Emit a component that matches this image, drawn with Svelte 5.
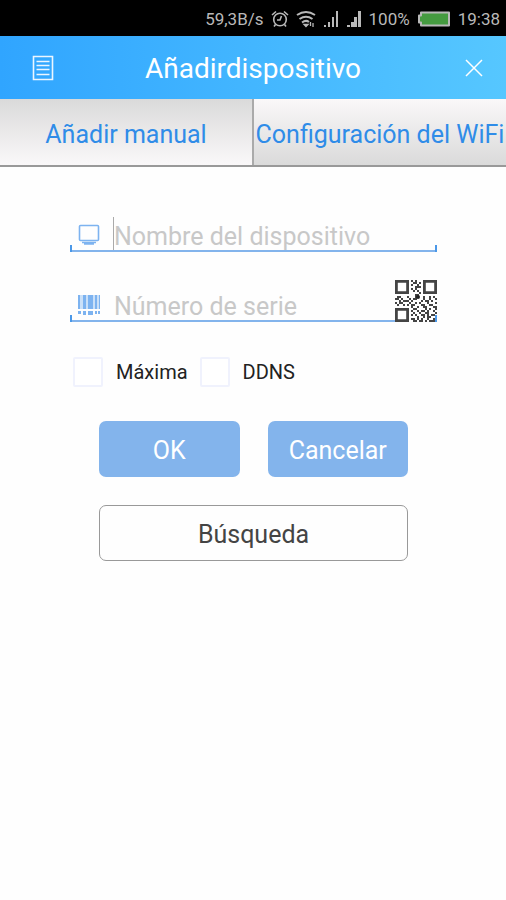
<script lang="ts">
  let name = $state('');
  let serial = $state('');
  let maxima = $state(false);
  let ddns = $state(false);
  let tab = $state('manual');

  const qrRows = [
    '111111101010001111111',
    '100000100110101000001',
    '100000101001001000001',
    '100000100011101000001',
    '100000101010001000001',
    '100000100101001000001',
    '111111100000101111111',
    '000000000011000000000',
    '011000100011001001010',
    '110100010110001001001',
    '001011101000010110100',
    '101100010010100010001',
    '010010101100011001100',
    '000000001001001100011',
    '111111100110000101001',
    '100000101001011010010',
    '100000100100100110001',
    '100000101010011010110',
    '100000100001001011001',
    '100000101101010010011',
    '111111100110110101110'
  ];

  const qrPath = qrRows
    .map((row, y) => [...row].map((c, x) => (c === '1' ? `M${x} ${y}h1v1h-1z` : '')).join(''))
    .join('');
</script>

<div class="screen">
  <div class="status-bar">
    <span>59,3B/s</span>
    <svg viewBox="0 0 18 18" width="18" height="18" fill="none" stroke="currentColor" stroke-width="1.6">
      <circle cx="9" cy="9.5" r="6.3" />
      <path d="M10.500 6L9 10H6M1 5l4-3.500M17 5l-4-3.500M4.500 14.500l-1.500 2M13.500 14.500l1.500 2" />
    </svg>
    <svg viewBox="0 0 20 18" width="20" height="18" fill="none" stroke="currentColor" stroke-width="2">
      <path d="M1 5Q10-1 19 5M3.500 9Q10 4.500 16.500 9M6 12.500Q10 9.500 13 12" />
      <path d="M8 14.500h4l-2 2zM14.500 12v4M17 13v4" fill="currentColor" stroke-width="1.3" />
    </svg>
    <svg viewBox="0 0 16 18" width="16" height="18" fill="currentColor">
      <path d="M1 15h2v2H1zM5 12h2v5H5zM9 7h2v10H9zM13 1h2v16h-2z" />
    </svg>
    <svg viewBox="0 0 16 18" width="16" height="18" fill="currentColor">
      <path d="M1 15h3v2H1zM5 12h3v5H5zM8 7h3v10H8zM12 1h3v16h-3z" />
    </svg>
    <span>100%</span>
    <svg viewBox="0 0 34 16" width="34" height="16">
      <path d="M4 1.500h28v13H4v-3H2v-7h2z" fill="#459b40" stroke="#b9b9b9" stroke-width="2" stroke-linejoin="round" />
    </svg>
    <span>19:38</span>
  </div>

  <header>
    <button class="icon-button" aria-label="Lista">
      <svg viewBox="0 0 22 26" width="22" height="26" fill="none" stroke="currentColor" stroke-width="1.6" opacity="0.9">
        <path d="M1.500 1.500h19v23h-19zM4.500 6.500h13M4.500 10.500h13M4.500 14.500h13M4.500 19.500h13" />
      </svg>
    </button>
    <h1>Añadirdispositivo</h1>
    <button class="icon-button close" aria-label="Cerrar">
      <svg viewBox="0 0 20 20" width="20" height="20" fill="none" stroke="currentColor" stroke-width="1.5">
        <path d="M2 2l16 16M18 2L2 18" />
      </svg>
    </button>
  </header>

  <nav class="tabs">
    <button class="tab" class:active={tab === 'manual'} onclick={() => (tab = 'manual')}>Añadir manual</button>
    <button class="tab" class:active={tab === 'wifi'} onclick={() => (tab = 'wifi')}>Configuración del WiFi</button>
  </nav>

  <form onsubmit={(e) => e.preventDefault()}>
    <div class="field">
      <svg class="field-icon" viewBox="0 0 24 24" width="24" height="24" fill="none" stroke="currentColor" stroke-width="1.6">
        <rect x="2.500" y="3.500" width="19" height="15" rx="1" />
        <path d="M5 20.500h14M7 22h10" />
      </svg>
      <input class="caret" type="text" placeholder="Nombre del dispositivo" aria-label="Nombre del dispositivo" bind:value={name} />
    </div>

    <div class="field">
      <svg class="field-icon" viewBox="0 0 24 24" width="24" height="24" fill="currentColor">
        <path d="M1 3h2v14H1zM6 3h3v14H6zM11 3h5v14h-5zM18 3h2v14h-2zM22 3h1v14h-1z" />
        <path d="M1 19h3v3H1zM6 19h3v4H6zM11 19h5v4h-5zM18 19h2v3h-2zM21 19h2v3h-2z" />
        <path d="M1 3h22v14H1z" opacity="0.4" />
      </svg>
      <input type="text" placeholder="Número de serie" aria-label="Número de serie" bind:value={serial} />
      <button class="qr" type="button" aria-label="Escanear código QR">
        <svg viewBox="0 0 21 21" width="42" height="42">
          <path d="M0 0h21v21H0z" fill="#fefefe" />
          <path d={qrPath} fill="#444" shape-rendering="crispEdges" />
          <path d="M.7.7h5.600v5.600H.7zM14.700.7h5.600v5.600h-5.600zM.7 14.700h5.600v5.600H.7z" fill="none" stroke="#444" stroke-width="1.4" />
          <circle cx="11.500" cy="8.500" r="1" fill="#222" />
        </svg>
      </button>
    </div>

    <div class="checks">
      <label><input type="checkbox" bind:checked={maxima} />Máxima</label>
      <label><input type="checkbox" bind:checked={ddns} />DDNS</label>
    </div>

    <div class="actions">
      <button class="primary" type="submit">OK</button>
      <button class="primary" type="button">Cancelar</button>
      <button class="search" type="button">Búsqueda</button>
    </div>
  </form>
</div>

<style>
  :global(body) {
    margin: 0;
    background: #fefefe;
  }

  .screen {
    font-family: Roboto, 'Liberation Sans', sans-serif;
    min-height: 100vh;
    overflow: hidden;
  }

  button {
    margin: 0;
    padding: 0;
    border: none;
    background: none;
    font: inherit;
    cursor: pointer;
  }

  svg {
    display: block;
    flex: none;
  }

  .status-bar {
    display: flex;
    align-items: center;
    justify-content: flex-end;
    gap: 7px;
    height: 36px;
    padding: 1px 6px 0;
    box-sizing: border-box;
    background: #000;
    color: #b9b9b9;
    font-size: 17px;
  }

  header {
    display: grid;
    grid-template-columns: 1fr auto 1fr;
    align-items: center;
    height: 63px;
    padding: 0 11px;
    background: linear-gradient(90deg, #30a5ff, #56c7ff);
    color: #fff;
  }

  h1 {
    margin: 0;
    padding-top: 2px;
    font-size: 28px;
    font-weight: 400;
    line-height: 36px;
  }

  .icon-button {
    display: flex;
    align-items: center;
    justify-content: center;
    width: 42px;
    height: 42px;
    margin-left: 11px;
    color: #fff;
  }

  .icon-button.close {
    justify-self: end;
  }

  .tabs {
    display: flex;
    height: 68px;
    box-sizing: border-box;
    border-bottom: 2px solid #999;
  }

  .tab {
    flex: 1 1 0;
    min-width: 0;
    padding-top: 4px;
    background: linear-gradient(#faf8f9, #dadada);
    color: #2f8ce8;
    font-size: 25px;
    white-space: nowrap;
  }

  .tab.active {
    background: linear-gradient(#dadada, #faf8f9);
  }

  .tab + .tab {
    border-left: 2px solid #aaa;
  }

  form {
    padding: 50px 69px 0 70px;
  }

  .field {
    display: flex;
    align-items: center;
    height: 35px;
    margin-bottom: 35px;
    padding-left: 7px;
    position: relative;
    border-bottom: 2px solid #83b4ec;
    box-sizing: border-box;
  }

  /* short upright ticks at both ends of the underline */
  .field::before,
  .field::after {
    content: '';
    position: absolute;
    bottom: -2px;
    width: 2px;
    height: 7px;
    background: #4b98e8;
  }

  .field::before {
    left: 0;
  }

  .field::after {
    right: 0;
  }

  .field-icon {
    margin-right: 12px;
    color: #7db3f0;
  }

  .field input {
    flex: 1;
    min-width: 0;
    height: 33px;
    padding: 5px 0 0;
    border: none;
    border-left: 1px solid transparent;
    outline: none;
    background: none;
    box-sizing: border-box;
    color: #333;
    font: inherit;
    font-size: 25px;
  }

  .field input.caret {
    border-left-color: #aaa;
  }

  .field input::placeholder {
    color: #c8c8c8;
    opacity: 1;
  }

  .qr {
    align-self: flex-end;
    margin-bottom: -2px;
  }

  .checks {
    display: flex;
    gap: 12px;
    padding-left: 3px;
    color: #222;
    font-size: 20px;
  }

  .checks label {
    display: flex;
    align-items: center;
    gap: 13px;
  }

  .checks input {
    appearance: none;
    width: 30px;
    height: 30px;
    margin: 0;
    border: 2px solid #f0f2fd;
    border-radius: 2px;
    background: #fff;
  }

  .checks input:checked {
    background: #83b4ec;
  }

  .actions {
    display: grid;
    grid-template-columns: 1fr 1fr;
    gap: 28px;
    margin-top: 34px;
    padding: 0 29px;
    font-size: 25px;
  }

  .actions button {
    height: 56px;
    padding-top: 3px;
    border-radius: 7px;
  }

  .primary {
    background: #83b4ec;
    color: #fff;
  }

  .actions .search {
    grid-column: 1 / -1;
    border: 1px solid #999;
    color: #444;
  }
</style>
